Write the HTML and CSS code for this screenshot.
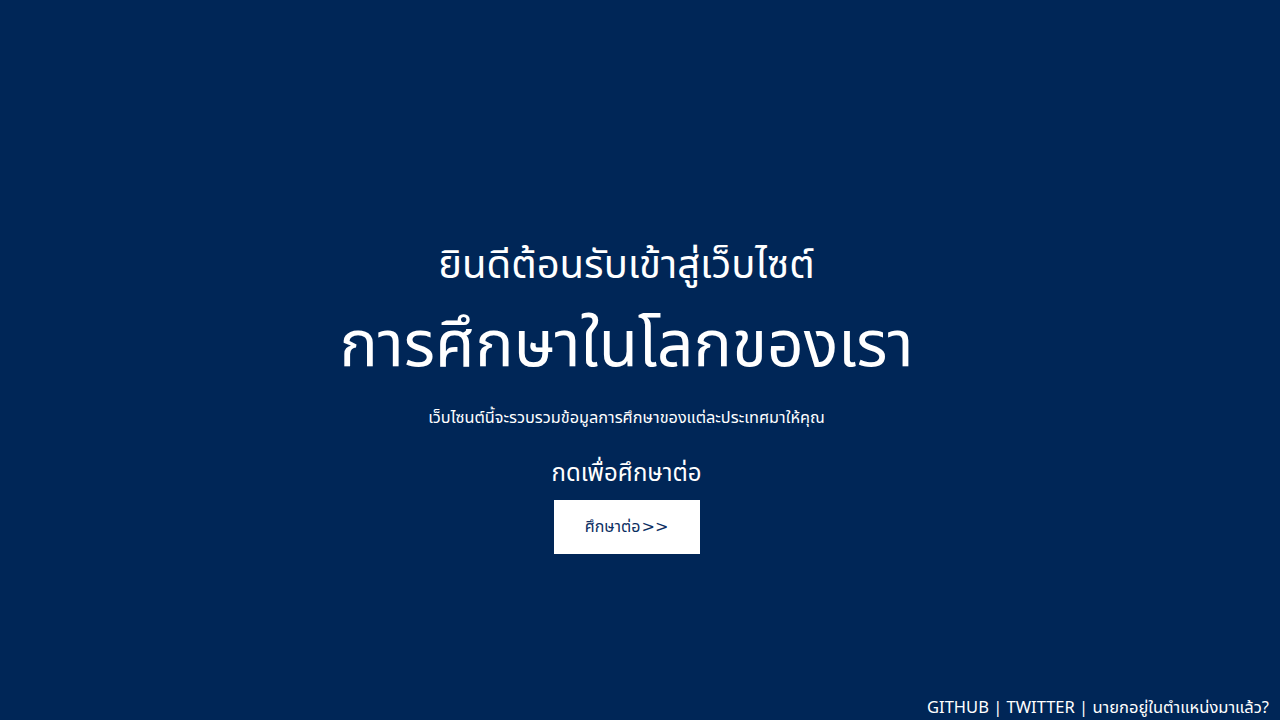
FILE: index.html
```html
<!DOCTYPE html>
<html lang="th">
<head>
<meta charset="utf-8">
<title>การศึกษาในโลกของเรา</title>
<link rel="stylesheet" href="styles.css">
</head>
<body>
<main class="hero">
  <h2 class="welcome">ยินดีต้อนรับเข้าสู่เว็บไซต์</h2>
  <h1 class="title">การศึกษาในโลกของเรา</h1>
  <p class="desc">เว็บไซนต์นี้จะรวบรวมข้อมูลการศึกษาของแต่ละประเทศมาให้คุณ</p>
  <h3 class="cta-label">กดเพื่อศึกษาต่อ</h3>
  <a class="btn" href="#">ศึกษาต่อ<span class="arrows">&gt;&gt;</span></a>
</main>
<footer class="footer">GITHUB | TWITTER | นายกอยู่ในตำแหน่งมาแล้ว?</footer>
</body>
</html>
```
FILE: styles.css
```css
html, body {
  margin: 0;
  padding: 0;
  height: 100%;
}
body {
  background: #002657;
  color: #ffffff;
  font-family: "Noto Sans Thai", "Noto Sans", sans-serif;
  display: flex;
  flex-direction: column;
  overflow: hidden;
}
.hero {
  flex: 1;
  display: flex;
  flex-direction: column;
  align-items: center;
  justify-content: center;
  padding-right: 27px;
  padding-top: 99px;
}
.welcome {
  margin: 0;
  font-size: 40px;
  font-weight: 400;
  line-height: 1.3;
}
.title {
  margin: 13px 0 0;
  font-size: 64px;
  font-weight: 400;
  line-height: 1.3;
}
.desc {
  margin: 17px 0 0;
  font-size: 16.3px;
}
.cta-label {
  margin: 26px 0 0;
  font-size: 24px;
  font-weight: 400;
}
.btn {
  margin-top: 8px;
  display: flex;
  align-items: center;
  justify-content: center;
  width: 146px;
  height: 54px;
  background: #ffffff;
  color: #0b2e62;
  text-decoration: none;
  font-size: 16px;
}
.arrows {
  font-family: "DejaVu Sans", sans-serif;
  margin-left: 1px;
}
.footer {
  text-align: right;
  padding: 0 11px 0 0;
  font-size: 16.5px;
}
```
